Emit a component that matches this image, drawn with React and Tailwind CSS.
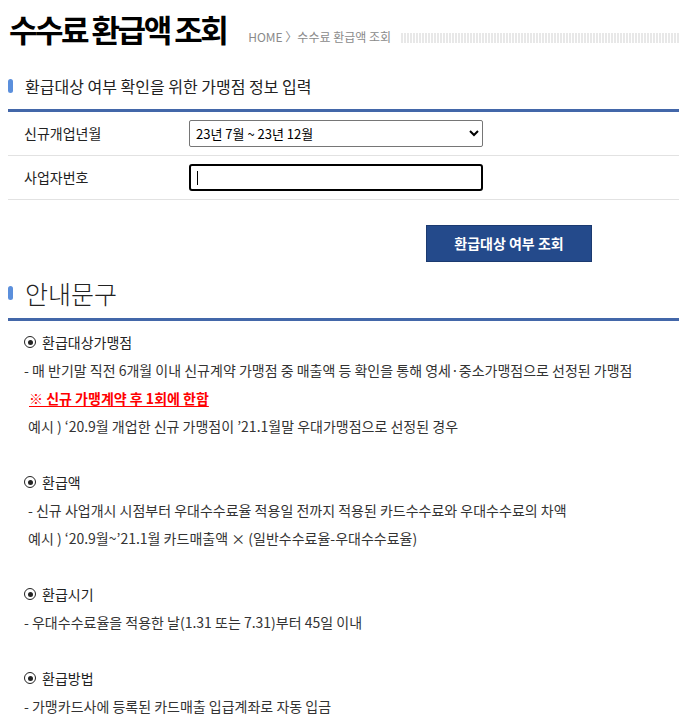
import React from 'react';

const FONT = { fontFamily: '"Noto Sans CJK KR", "Noto Sans", sans-serif' };

/* Small rounded blue marker in front of each section heading */
const SectionTitle = ({ children, large }) => (
    <div className={large ? 'flex items-center gap-[12px] pl-[8px] h-[30px]' : 'flex items-center gap-[12px] pl-[8px] h-[22px]'}>
        <span className="w-[5px] h-[14px] rounded-full bg-[#5b8fdc]" />
        <span className={large ? 'text-[25px] font-light text-[#222] leading-none' : 'text-[16px] text-[#222] leading-none'}>
            {children}
        </span>
    </div>
);

const FormRow = ({ label, children }) => (
    <div className="flex items-center h-[44px] border-b border-[#e2e2e2]">
        <div className="w-[181px] pl-[16px] text-[14px] text-[#222]">{label}</div>
        {children}
    </div>
);

const Item = ({ title, children }) => (
    <div className="flex flex-col">
        <div className="h-[28px] flex items-center text-[14px] text-[#222]">
            <span className="mr-[6px] inline-flex w-[12px] h-[12px] rounded-full border border-[#222] items-center justify-center">
                <span className="w-[5px] h-[5px] rounded-full bg-[#222]" />
            </span>
            {title}
        </div>
        {children}
    </div>
);

const Line = ({ children, className = '' }) => (
    <div className={'h-[28px] flex items-center text-[14px] text-[#333] ' + className}>{children}</div>
);

export default function App() {
    return (
        <div className="w-[679px] bg-white pb-[10px]" style={FONT}>
            {/* ─── Page title + breadcrumb ─── */}
            <div className="flex items-end pl-[9px] pt-[2px] h-[44px]">
                <h1 className="text-[31px] font-bold text-black leading-none tracking-[-2.5px]">수수료 환급액 조회</h1>
                <span className="ml-[22px] text-[12px] text-[#8a8a8a] leading-none mb-[1px]">HOME 〉수수료 환급액 조회</span>
                <span className="ml-[10px] mb-[1px] flex-1 h-[10px] bg-[repeating-linear-gradient(90deg,#e8e8e8_0,#e8e8e8_2px,#ffffff_2px,#ffffff_3px)]" />
            </div>

            {/* ─── Input section ─── */}
            <div className="mt-[31px]">
                <SectionTitle>환급대상 여부 확인을 위한 가맹점 정보 입력</SectionTitle>
            </div>
            <div className="ml-[8px] mt-[12px] border-t-[3px] border-[#4367a9]">
                <FormRow label="신규개업년월">
                    <select
                        className="w-[294px] h-[27px] border border-[#767676] rounded-[2px] bg-white text-[13px] text-black px-[2px]"
                        defaultValue="a"
                    >
                        <option value="a">23년 7월 ~ 23년 12월</option>
                        <option value="b">23년 1월 ~ 23년 6월</option>
                    </select>
                </FormRow>
                <FormRow label="사업자번호">
                    <div className="relative">
                        <input className="w-[294px] h-[27px] border-2 border-black rounded-[3px] outline-none px-[6px]" />
                        <span className="absolute left-[8px] top-[7px] w-px h-[14px] bg-black" />
                    </div>
                </FormRow>
            </div>

            <div className="flex mt-[25px] pl-[426px]">
                <button className="w-[166px] h-[37px] bg-[#244a8b] border border-[#1b3a70] text-white text-[14px] font-bold">
                    환급대상 여부 조회
                </button>
            </div>

            {/* ─── Notice section ─── */}
            <div className="mt-[16px]">
                <SectionTitle large>안내문구</SectionTitle>
            </div>
            <div className="ml-[8px] mt-[10px] border-t-[3px] border-[#4367a9] pl-[16px] pt-[7px]">
                <Item title="환급대상가맹점">
                    <Line>- 매 반기말 직전 6개월 이내 신규계약 가맹점 중 매출액 등 확인을 통해 영세·중소가맹점으로 선정된 가맹점</Line>
                    <Line className="pl-[5px]">
                        <span className="text-[#ff0000] font-bold underline underline-offset-2">※ 신규 가맹계약 후 1회에 한함</span>
                    </Line>
                    <Line className="pl-[4px]">예시 ) ‘20.9월 개업한 신규 가맹점이 ’21.1월말 우대가맹점으로 선정된 경우</Line>
                    <Line />
                </Item>
                <Item title="환급액">
                    <Line className="pl-[4px]">- 신규 사업개시 시점부터 우대수수료율 적용일 전까지 적용된 카드수수료와 우대수수료의 차액</Line>
                    <Line className="pl-[4px]">예시 ) ‘20.9월~’21.1월 카드매출액 × (일반수수료율-우대수수료율)</Line>
                    <Line />
                </Item>
                <Item title="환급시기">
                    <Line>- 우대수수료율을 적용한 날(1.31 또는 7.31)부터 45일 이내</Line>
                    <Line />
                </Item>
                <Item title="환급방법">
                    <Line>- 가맹카드사에 등록된 카드매출 입급계좌로 자동 입금</Line>
                </Item>
            </div>
        </div>
    );
}
